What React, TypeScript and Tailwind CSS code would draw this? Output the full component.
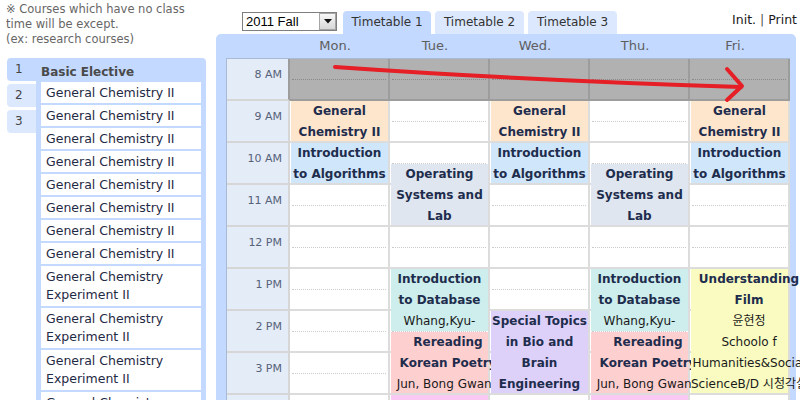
import React from 'react';

type Line = { t: string; b?: boolean };

interface Block {
  day: number;
  start: number;
  len: number;
  bg: string;
  mb: string;
  box?: string;
  lines: Line[];
}

const HOURS = ['8 AM', '9 AM', '10 AM', '11 AM', '12 PM', '1 PM', '2 PM', '3 PM', '4 PM', '5 PM'];
const DAYS = ['Mon.', 'Tue.', 'Wed.', 'Thu.', 'Fri.'];

const genChem: Line[] = [{ t: 'General', b: true }, { t: 'Chemistry II', b: true }];
const algo: Line[] = [{ t: 'Introduction', b: true }, { t: 'to Algorithms', b: true }];
const os: Line[] = [{ t: 'Operating', b: true }, { t: 'Systems and', b: true }, { t: 'Lab', b: true }];
const db: Line[] = [{ t: 'Introduction', b: true }, { t: 'to Database', b: true }, { t: 'Whang,Kyu-' }];
const poetry: Line[] = [{ t: 'Rereading', b: true }, { t: 'Korean Poetry', b: true }, { t: 'Jun, Bong Gwang' }];

const BLOCKS: Block[] = [
  { day: 0, start: 3, len: 2, bg: 'bg-[#fee6cd]', mb: 'mb-[2px]', lines: genChem },
  { day: 0, start: 5, len: 2, bg: 'bg-[#d0e6fb]', mb: 'mb-[2px]', lines: algo },
  { day: 1, start: 6, len: 3, bg: 'bg-[#dfe6f0]', mb: 'mb-[2px]', lines: os },
  { day: 1, start: 11, len: 3, bg: 'bg-[#cdeeec]', mb: 'mb-[1px]', lines: db },
  { day: 1, start: 14, len: 3, bg: 'bg-[#fecfcf]', mb: 'mb-[2px]', box: 'w-[114px]', lines: poetry },
  { day: 1, start: 17, len: 3, bg: 'bg-[#f9c8f3]', mb: 'mb-[2px]', lines: [] },
  { day: 2, start: 3, len: 2, bg: 'bg-[#fee6cd]', mb: 'mb-[2px]', lines: genChem },
  { day: 2, start: 5, len: 2, bg: 'bg-[#d0e6fb]', mb: 'mb-[2px]', lines: algo },
  {
    day: 2,
    start: 13,
    len: 4,
    bg: 'bg-[#ddd0f9]',
    mb: 'mb-[2px]',
    lines: [
      { t: 'Special Topics', b: true },
      { t: 'in Bio and', b: true },
      { t: 'Brain', b: true },
      { t: 'Engineering', b: true },
    ],
  },
  { day: 3, start: 6, len: 3, bg: 'bg-[#dfe6f0]', mb: 'mb-[2px]', lines: os },
  { day: 3, start: 11, len: 3, bg: 'bg-[#cdeeec]', mb: 'mb-[1px]', lines: db },
  { day: 3, start: 14, len: 3, bg: 'bg-[#fecfcf]', mb: 'mb-[2px]', box: 'w-[114px]', lines: poetry },
  { day: 3, start: 17, len: 3, bg: 'bg-[#f9c8f3]', mb: 'mb-[2px]', lines: [] },
  { day: 4, start: 3, len: 2, bg: 'bg-[#fee6cd]', mb: 'mb-[2px]', lines: genChem },
  { day: 4, start: 5, len: 2, bg: 'bg-[#d0e6fb]', mb: 'mb-[2px]', lines: algo },
  {
    day: 4,
    start: 11,
    len: 6,
    bg: 'bg-[#f9fbc1]',
    mb: 'mb-[2px]',
    box: 'w-[116px]',
    lines: [
      { t: 'Understanding', b: true },
      { t: 'Film', b: true },
      { t: '윤현정' },
      { t: 'Schoolo f' },
      { t: 'Humanities&Social' },
      { t: 'ScienceB/D 시청각실' },
    ],
  },
];

const ELECTIVES = [
  ...Array(8).fill('General Chemistry II'),
  'General Chemistry Experiment II',
  'General Chemistry Experiment II',
  'General Chemistry Experiment II',
  'General Chemistry Experiment II',
];

const LeftPane = () => (
  <div className="w-[216px] shrink-0 flex flex-col">
    <div className="h-[58px] shrink-0 pl-[6px] pt-[2px] text-[11.5px] leading-[15px] text-[#666]">
      ※ Courses which have no class
      <br />
      time will be except.
      <br />
      (ex: research courses)
    </div>
    <div className="flex flex-1 ml-[7px]">
      <div className="w-[29px] shrink-0 flex flex-col gap-[3px] text-[12px] text-[#444]">
        <div className="h-[23px] pl-[8px] leading-[22px] bg-[#c3d9ff] rounded-l-[4px]">1</div>
        <div className="h-[23px] pl-[8px] leading-[23px] bg-[#dce8fd] rounded-l-[4px]">2</div>
        <div className="h-[23px] pl-[8px] leading-[23px] bg-[#dce8fd] rounded-l-[4px]">3</div>
      </div>
      <div className="w-[170px] shrink-0 bg-[#c3d9ff] rounded-tr-[4px] px-[5px]">
        <div className="h-[24px] pt-[7px] leading-[14px] text-[12px] font-bold text-[#4a4a4a]">Basic Elective</div>
        <div className="flex flex-col gap-[2px]">
          {ELECTIVES.map((name, i) => (
            <div
              key={i}
              className={`shrink-0 bg-white pl-[5px] text-[12.5px] text-[#1f2a44] ${
                i < 8 ? 'h-[21px] leading-[21px]' : 'h-[40px] py-[2px] leading-[18px]'
              }`}
            >
              {name}
            </div>
          ))}
        </div>
      </div>
    </div>
  </div>
);

const TopBar = () => (
  <div className="h-[34px] shrink-0 flex items-end">
    <div className="ml-[26px] mb-[3px] w-[95px] h-[19px] border border-[#7f7f7f] bg-white flex items-center">
      <span className="pl-[3px] text-[13px] text-black font-['Liberation_Sans',Arial,sans-serif]">2011 Fall</span>
      <div className="ml-auto w-[17px] h-[17px] border border-[#a5a5a5] bg-gradient-to-b from-[#f7f7f7] to-[#d8d8d8] flex items-center justify-center">
        <svg width="8" height="5" viewBox="0 0 8 5">
          <polygon points="0,0 8,0 4,4.5" fill="#111" />
        </svg>
      </div>
    </div>
    <div className="ml-[6px] flex gap-[4px] text-[12px] text-[#333]">
      <div className="w-[88px] h-[23px] leading-[23px] text-center bg-[#c3d9ff] rounded-t-[4px]">Timetable 1</div>
      <div className="w-[89px] h-[23px] leading-[23px] text-center bg-[#dce8fd] rounded-t-[4px]">Timetable 2</div>
      <div className="w-[89px] h-[23px] leading-[23px] text-center bg-[#dce8fd] rounded-t-[4px]">Timetable 3</div>
    </div>
    <div className="ml-auto mr-[3px] self-start mt-[13px] text-[12.5px] leading-[14px] text-[#1a1a1a]">
      Init. <span className="text-[#555]">|</span> Print
    </div>
  </div>
);

const Timetable = () => (
  <div className="grid grid-cols-[63px_repeat(5,100px)] grid-rows-[repeat(20,21px)] border-l border-t border-[#a8bbd6] w-max">
    {HOURS.map((h, hi) => (
      <React.Fragment key={h}>
        <div
          style={{ gridRow: `${hi * 2 + 1} / span 2`, gridColumn: 1 }}
          className={`bg-[#e4ecf7] border-r-2 border-b-2 text-right pr-[6px] pt-[9px] text-[11px] leading-[13px] text-[#56627a] ${
            hi === 0 ? 'border-r-[#9c9c9c] border-b-[#d6d6d6]' : 'border-[#d6d6d6]'
          }`}
        >
          {h}
        </div>
        {DAYS.map((d, di) => (
          <div
            key={d}
            style={{ gridRow: `${hi * 2 + 1} / span 2`, gridColumn: di + 2 }}
            className={
              hi === 0
                ? 'bg-[#b1b1b1] border-r-2 border-b-2 border-[#9c9c9c]'
                : 'bg-white border-r-2 border-b-2 border-[#dcdcdc]'
            }
          >
            <div
              className={`h-[21px] mx-[2px] border-b border-dotted ${
                hi === 0 ? 'border-[#8a8a8a]' : 'border-[#cccccc]'
              }`}
            />
          </div>
        ))}
      </React.Fragment>
    ))}
    {BLOCKS.map((b, i) => (
      <div
        key={i}
        style={{ gridRow: `${b.start} / span ${b.len}`, gridColumn: b.day + 2 }}
        className={`${b.bg} ${b.mb} ml-px mr-[2px] text-[12px] leading-[21px]`}
      >
        <div className={`${b.box ?? 'w-full'} text-center`}>
          {b.lines.map((l, j) => (
            <div
              key={j}
              className={`whitespace-nowrap ${l.b ? 'font-bold text-[#1e2d4d]' : 'text-[#1a1a1a]'}`}
            >
              {l.t}
            </div>
          ))}
        </div>
      </div>
    ))}
  </div>
);

const RightPane = () => (
  <div className="flex-1 flex flex-col min-h-0">
    <TopBar />
    <div className="flex-1 w-[580px] bg-[#c3d9ff] rounded-t-[5px] pl-[10px]">
      <div className="grid grid-cols-[63px_repeat(5,100px)] h-[24px] text-[13px] leading-[24px] text-[#5e5e5e]">
        <div />
        {DAYS.map((d) => (
          <div key={d} className="text-center pr-[8px]">
            {d}
          </div>
        ))}
      </div>
      <Timetable />
    </div>
  </div>
);

const Arrow = () => (
  <svg className="absolute left-0 top-0 pointer-events-none" width="800" height="400" viewBox="0 0 800 400">
    <path d="M335 67 Q520 80 741 87" stroke="#e61e25" strokeWidth="4" fill="none" strokeLinecap="round" />
    <polyline
      points="727,69 742,86 727,100"
      stroke="#e61e25"
      strokeWidth="4"
      fill="none"
      strokeLinecap="round"
      strokeLinejoin="round"
    />
  </svg>
);

export default function App() {
  return (
    <div className="relative flex w-[800px] h-[400px] overflow-hidden bg-white font-['DejaVu_Sans','Noto_Sans_CJK_KR',sans-serif]">
      <LeftPane />
      <RightPane />
      <Arrow />
    </div>
  );
}
